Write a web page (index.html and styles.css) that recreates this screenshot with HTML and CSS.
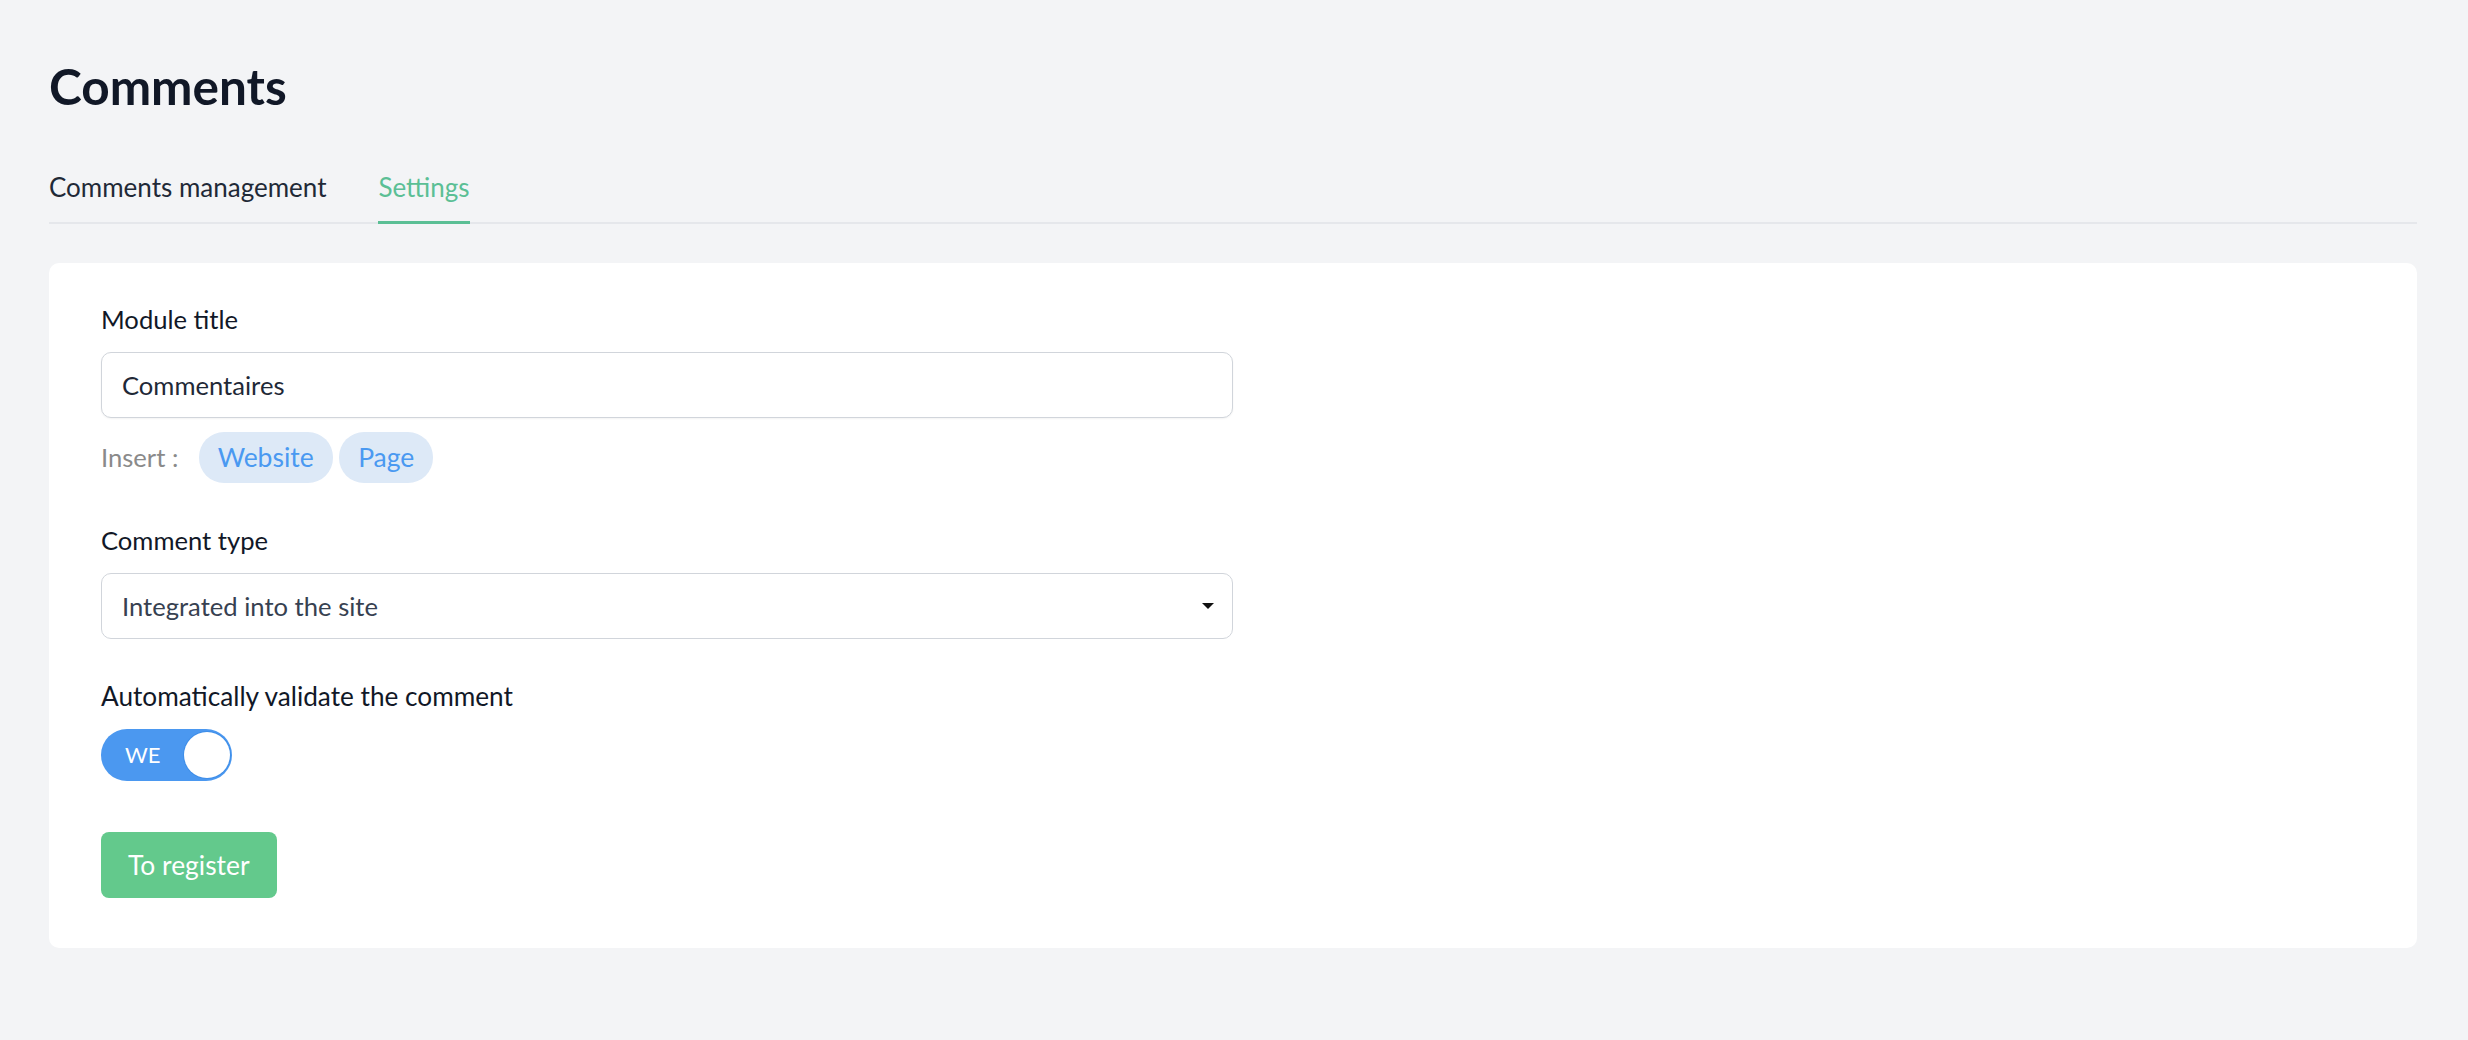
FILE: index.html
```html
<!DOCTYPE html>
<html lang="en">
<head>
    <meta charset="UTF-8">
    <meta name="viewport" content="width=device-width, initial-scale=1.0">
    <title>Comments</title>
    <link rel="stylesheet" href="styles.css">
</head>
<body>

    <div class="page">
        <h1 class="title">Comments</h1>

        <nav class="tabs">
            <a class="tab">Comments management</a>
            <a class="tab active">Settings</a>
        </nav>

        <div class="card">
            <div class="field">
                <label class="label">Module title</label>
                <input class="input" type="text" value="Commentaires">
                <div class="insert">
                    <span class="insert-label">Insert :</span>
                    <span class="chip">Website</span>
                    <span class="chip">Page</span>
                </div>
            </div>

            <div class="field">
                <label class="label">Comment type</label>
                <div class="select">
                    <span>Integrated into the site</span>
                    <svg class="arrow" width="12" height="6" viewBox="0 0 12 6"><path d="M0 0h12L6 6z" fill="#111"/></svg>
                </div>
            </div>

            <div class="field last">
                <label class="label">Automatically validate the comment</label>
                <div class="toggle">
                    <span class="toggle-text">WE</span>
                    <span class="knob"></span>
                </div>
            </div>

            <div class="actions">
                <button class="btn">To register</button>
            </div>
        </div>
    </div>

</body>
</html>
```

FILE: styles.css
```css
* {
    box-sizing: border-box;
}
body {
    margin: 0;
    font-family: "Lato", "Noto Sans", sans-serif;
    background-color: #f3f4f6;
    color: #111827;
}
.page {
    padding: 58px 51px 0 49px;
}
.title {
    margin: 0;
    font-size: 49.5px;
    line-height: 57.6px;
    font-weight: 700;
    color: #111827;
}
.tabs {
    margin-top: 50px;
    display: flex;
    gap: 52px;
    border-bottom: 2px solid #e5e7eb;
}
.tab {
    font-size: 26px;
    line-height: 43.2px;
    padding-bottom: 12px;
    border-bottom: 3px solid transparent;
    margin-bottom: -2px;
    color: #1f2937;
    cursor: pointer;
}
.tab.active {
    color: #5bbf95;
    border-bottom-color: #5bbf95;
}
.card {
    margin-top: 39px;
    background-color: white;
    border-radius: 10px;
    padding: 37px 52px 50px;
}
.field {
    margin-bottom: 38px;
}
.field.last {
    margin-bottom: 0;
}
.label {
    display: block;
    font-size: 25.6px;
    line-height: 38.4px;
    color: #111827;
    margin-bottom: 14px;
}
.field.last .label {
    font-size: 26.2px;
}
.input,
.select {
    width: 50%;
    height: 66px;
    border: 1px solid #d1d5db;
    border-radius: 10px;
    padding: 0 20px;
    font-family: inherit;
    font-size: 25.6px;
    color: #1f2937;
    background: white;
    box-shadow: 0 1px 2px rgba(0, 0, 0, 0.05);
    outline: none;
}
.select {
    display: flex;
    align-items: center;
    justify-content: space-between;
    padding-right: 18px;
    color: #374151;
    box-shadow: none;
}
.insert {
    margin-top: 14px;
    display: flex;
    align-items: center;
    gap: 6.4px;
    font-size: 25.6px;
}
.insert-label {
    color: #8a8a8a;
    margin-right: 14px;
}
.chip {
    padding: 6px 19px;
    font-size: 26.5px;
    line-height: 38.4px;
    border-radius: 25px;
    background-color: #dde9f7;
    color: #4a99f1;
}
.toggle {
    width: 131px;
    height: 52px;
    border-radius: 26px;
    background-color: #4b98f0;
    display: flex;
    align-items: center;
    justify-content: space-between;
    padding: 0 2px 0 24px;
}
.toggle-text {
    color: white;
    font-size: 22px;
    line-height: 1;
}
.knob {
    width: 46px;
    height: 46px;
    border-radius: 50%;
    background-color: white;
    box-shadow: 0 0 0 1px #3f8ee8;
}
.actions {
    margin-top: 51px;
}
.btn {
    height: 66px;
    padding: 0 27px;
    border: none;
    border-radius: 8px;
    background-color: #63c98c;
    color: white;
    font-family: inherit;
    font-size: 26.4px;
    cursor: pointer;
}
```
